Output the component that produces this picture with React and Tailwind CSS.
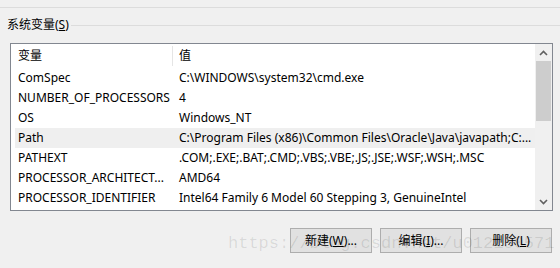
import React from 'react';

const font = { fontFamily: '"Noto Sans", "Noto Sans CJK SC", sans-serif' };

const rows = [
  ['ComSpec', 'C:\\WINDOWS\\system32\\cmd.exe'],
  ['NUMBER_OF_PROCESSORS', '4'],
  ['OS', 'Windows_NT'],
  ['Path', 'C:\\Program Files (x86)\\Common Files\\Oracle\\Java\\javapath;C:...', true],
  ['PATHEXT', '.COM;.EXE;.BAT;.CMD;.VBS;.VBE;.JS;.JSE;.WSF;.WSH;.MSC'],
  ['PROCESSOR_ARCHITECT...', 'AMD64'],
  ['PROCESSOR_IDENTIFIER', 'Intel64 Family 6 Model 60 Stepping 3, GenuineIntel'],
];

const Chevron = ({ up }) => (
  <svg width="9" height="6" viewBox="0 0 9 6" className="block">
    <path
      d={up ? 'M1 5 L4.5 1.5 L8 5' : 'M1 1 L4.5 4.5 L8 1'}
      fill="none"
      stroke="#606060"
      strokeWidth="1.6"
    />
  </svg>
);

const Button = ({ label, hot, rest }) => (
  <button className="w-[82px] h-[25px] bg-[#e1e1e1] border border-[#adadad] text-[12px] text-black flex items-center justify-center">
    {label}(<span className="underline">{hot}</span>){rest}
  </button>
);

export default function App() {
  return (
    <div className="w-[560px] h-[268px] bg-[#f0f0f0] relative overflow-hidden text-black" style={font}>
      {/* separador superior */}
      <div className="pt-[7px]">
        <div className="h-px bg-[#dcdcdc]" />
      </div>

      {/* titlul grupului */}
      <div className="flex items-center mt-[10px] h-[14px]">
        <span className="pl-[7px] pr-[2px] text-[12px] leading-[14px] whitespace-nowrap">
          系统变量(<span className="underline">S</span>)
        </span>
        <div className="flex-1 h-px bg-[#dcdcdc]" />
      </div>

      {/* lista */}
      <div className="ml-[10px] mt-[11px] w-[543px] h-[168px] border border-[#828790] bg-white flex">
        <div className="flex-1 flex flex-col text-[12px]">
          <div className="h-[24px] flex items-center">
            <div className="w-[161px] pl-[7px]">变量</div>
            <div className="w-px h-[20px] bg-[#e5e5e5]" />
            <div className="pl-[6px]">值</div>
          </div>
          {rows.map(([name, value, sel]) => (
            <div
              key={name}
              className={`h-[20px] flex items-center ml-[4px] ${sel ? 'bg-[#efefef]' : ''}`}
            >
              <div className="w-[158px] pl-[3px] whitespace-nowrap">{name}</div>
              <div className="pl-[6px] whitespace-nowrap">{value}</div>
            </div>
          ))}
        </div>
        <div className="w-[17px] bg-[#f0f0f0] flex flex-col items-center">
          <div className="h-[17px] flex items-center justify-center">
            <Chevron up />
          </div>
          <div className="w-[15px] h-[60px] bg-[#cdcdcd]" />
          <div className="flex-1" />
          <div className="h-[17px] flex items-center justify-center">
            <Chevron />
          </div>
        </div>
      </div>

      {/* butoane */}
      <div className="flex justify-end gap-[8px] pr-[8px] mt-[17px]">
        <Button label="新建" hot="W" rest="..." />
        <Button label="编辑" hot="I" rest="..." />
        <Button label="删除" hot="L" rest="" />
      </div>

      {/* watermark */}
      <div
        className="absolute left-[228px] top-[231px] text-[17px] text-black/10 whitespace-nowrap pointer-events-none"
        style={{ fontFamily: '"Liberation Mono", monospace' }}
      >
        https://blog.csdn.net/u012150571
      </div>
    </div>
  );
}
